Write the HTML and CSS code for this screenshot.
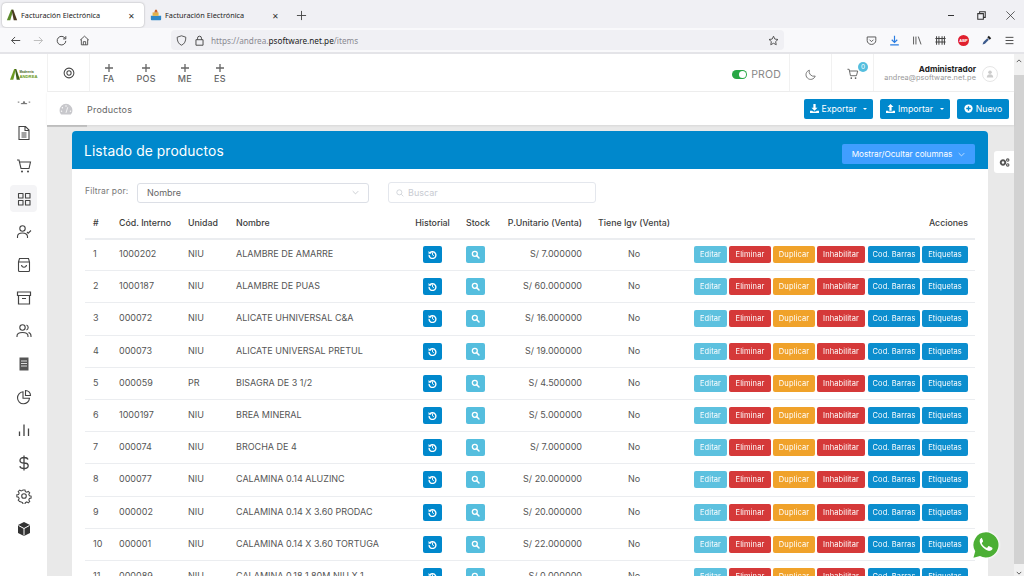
FILE: index.html
```html
<!DOCTYPE html>
<html lang="es">
<head>
<meta charset="utf-8">
<title>Facturación Electrónica</title>
<link rel="stylesheet" href="styles.css">
</head>
<body>
<svg class="defs" width="0" height="0" aria-hidden="true">
  <symbol id="i-history" viewBox="0 0 16 16"><path d="M3.400 5.200A6 6 0 1 1 2 8.600" fill="none" stroke="#fff" stroke-width="2.400"/><path d="M1 1.800v5h5z" fill="#fff"/><path d="M8 4.600v3.900l2.400 1.600" fill="none" stroke="#fff" stroke-width="1.700"/></symbol>
  <symbol id="i-search" viewBox="0 0 16 16"><circle cx="6.800" cy="6.800" r="4.400" fill="none" stroke="#fff" stroke-width="2.300"/><path d="M10 10l4.200 4.200" stroke="#fff" stroke-width="2.600" stroke-linecap="round"/></symbol>
  <symbol id="i-plus" viewBox="0 0 8 8"><path d="M4 0v8M0 4h8" stroke="#666" stroke-width="1.300"/></symbol>
</svg>

<div class="tabs">
  <div class="tab tab-active">
    <svg class="favicon" viewBox="0 0 14 14"><path d="M1 13L6 1h2.500L5 13z" fill="#5c8a2c"/><path d="M6.500 1h2l4.500 12H9z" fill="#4a3a20"/></svg>
    <span class="tab-title">Facturación Electrónica</span><span class="tab-x">✕</span>
  </div>
  <div class="tab">
    <svg class="favicon" viewBox="0 0 14 14"><path d="M1 8h12v4a1 1 0 0 1-1 1H2a1 1 0 0 1-1-1z" fill="#2f88c8"/><path d="M3 8V4h7v4z" fill="#e2b24a"/><path d="M5 4l1-3h2l1 3z" fill="#c9662e"/></svg>
    <span class="tab-title">Facturación Electrónica</span><span class="tab-x">✕</span>
  </div>
  <svg class="newtab" viewBox="0 0 12 12"><path d="M6 1v10M1 6h10" stroke="#444" stroke-width="1" fill="none"/></svg>
  <div class="winctl">
    <svg viewBox="0 0 12 12"><path d="M0 6h8" stroke="#333" stroke-width="1.400"/></svg>
    <svg viewBox="0 0 12 12"><path d="M3.500 3V1h7.500v7.500H9M1 3.500h7.500V11H1z" stroke="#333" stroke-width="1.400" fill="none"/></svg>
    <svg viewBox="0 0 12 12"><path d="M.5 .5l11 11M11.500 .5l-11 11" stroke="#333" stroke-width="1"/></svg>
  </div>
</div>

<div class="toolbar">
  <div class="nav-btns">
    <svg viewBox="0 0 14 14"><path d="M13 7H2M6.500 2.500L2 7l4.500 4.500" stroke="#444" stroke-width="1.200" fill="none"/></svg>
    <svg viewBox="0 0 14 14"><path d="M1 7h11M7.500 2.500L12 7l-4.500 4.500" stroke="#bbb" stroke-width="1.200" fill="none"/></svg>
    <svg viewBox="0 0 14 14"><path d="M11.800 4.500A5.500 5.500 0 1 0 12.500 7.500M12.500 1.500v3.500H9" stroke="#444" stroke-width="1.200" fill="none"/></svg>
    <svg viewBox="0 0 14 14"><path d="M1.500 6.500L7 1.500l5.500 5M3 5.500V12.500h8V5.500M5.500 12.500V8.500h3v4" stroke="#444" stroke-width="1.100" fill="none"/></svg>
  </div>
  <div class="urlbar">
    <svg class="url-ic" viewBox="0 0 14 14"><path d="M7 1l5.500 1.800c0 5-1.500 8.500-5.500 10.200C3 11.300 1.500 7.800 1.500 2.800z" stroke="#444" stroke-width="1.100" fill="none"/></svg>
    <svg class="url-ic" viewBox="0 0 14 14"><path d="M4.500 6V4a2.500 2.500 0 0 1 5 0v2M2.500 6h9v7h-9z" stroke="#444" stroke-width="1.200" fill="none"/></svg>
    <span class="url">https://andrea.<b>psoftware.net.pe</b>/items</span>
    <svg class="url-star" viewBox="0 0 14 14"><path d="M7 1.500l1.700 3.700 4 .5-3 2.700.8 4L7 10.500l-3.500 1.900.8-4-3-2.700 4-.5z" stroke="#444" stroke-width="1.100" fill="none"/></svg>
  </div>
  <div class="tool-icons">
    <svg viewBox="0 0 14 14"><path d="M1.500 2.500h11v4.500a5.500 5 0 0 1-11 0zM4.500 6L7 8.500 9.500 6" stroke="#555" stroke-width="1.200" fill="none"/></svg>
    <svg viewBox="0 0 14 14"><path d="M7 1v8.500M3.500 6L7 9.500 10.500 6M1.500 12.500h11" stroke="#2a7de1" stroke-width="1.500" fill="none"/></svg>
    <svg viewBox="0 0 14 14"><path d="M2 2v10M5 2v10M8 2l3.500 10" stroke="#555" stroke-width="1.200" fill="none"/></svg>
    <svg viewBox="0 0 14 14"><path d="M2 1.500v11M5 1.500v11M9 1.500v11M12 1.500v11M0.500 4.500h13M0.500 9h13" stroke="#444" stroke-width="1.300" fill="none"/></svg>
    <span class="abp">ABP</span>
    <svg viewBox="0 0 14 14"><path d="M2 12l1-3 5-5 2 2-5 5z" fill="#3c5a8c"/><path d="M8 3l2-2 3 3-2 2z" fill="#222"/></svg>
    <svg viewBox="0 0 14 14"><path d="M2 3h10M2 7h10M2 11h10" stroke="#444" stroke-width="1.200"/></svg>
  </div>
</div>

<div class="app">
  <aside class="sidebar">
    <div class="logo">
      <svg class="logo-a" viewBox="0 0 12 14"><path d="M0 14L5 1h2L4 14z" fill="#6d9b22"/><path d="M6 1h1.500L12 14H8z" fill="#3f5f18"/></svg>
      <div class="logo-text"><span>Madereria</span><span class="logo-big">ANDREA</span></div>
    </div>
    <nav class="side-nav">
      <div class="nav-clip"><svg viewBox="0 0 18 5"><path d="M1 2h2M15 2h2M5 4h8M7.500 4L9 1l1.500 3" stroke="#555" stroke-width="1.100" fill="none"/></svg></div>
      <div class="nav-item"><svg viewBox="0 0 16 16"><path d="M3 1.500h6.500l3.500 3.500v9.500H3zM9 1.500V5.500h4M5.500 8h5M5.500 10h5M5.500 12h5" stroke="#444" stroke-width="1.100" fill="none"/></svg></div>
      <div class="nav-item"><svg viewBox="0 0 16 16"><path d="M1 2h2l2 8.500h8l1.500-6.500H3.500" stroke="#444" stroke-width="1.100" fill="none"/><circle cx="6" cy="13.500" r="1" fill="#444"/><circle cx="12" cy="13.500" r="1" fill="#444"/></svg></div>
      <div class="nav-item nav-active"><svg viewBox="0 0 16 16"><path d="M2.500 2.500h4.500v4.500H2.500zM9.500 2.500h4.500v4.500H9.500zM2.500 9.500h4.500v4.500H2.500zM9.500 9.500h4.500v4.500H9.500z" stroke="#444" stroke-width="1.100" fill="none" stroke-linejoin="round"/></svg></div>
      <div class="nav-item"><svg viewBox="0 0 16 16"><circle cx="6.500" cy="4.500" r="2.700" stroke="#444" stroke-width="1.100" fill="none"/><path d="M1.500 14v-1.500c0-2 2-3.500 5-3.500s5 1.500 5 3.500V14M11 8l1.200 1.200L15 6.500" stroke="#444" stroke-width="1.100" fill="none"/></svg></div>
      <div class="nav-item"><svg viewBox="0 0 16 16"><path d="M2.500 5l1-3.500h9l1 3.500v8.500a1 1 0 0 1-1 1h-9a1 1 0 0 1-1-1zM2.500 5h11M5.500 8c.5 3 4.500 3 5 0" stroke="#444" stroke-width="1.100" fill="none"/></svg></div>
      <div class="nav-item"><svg viewBox="0 0 16 16"><path d="M1.500 2h13v3.500h-13zM2.500 5.500V14h11V5.500M6 8.500h4" stroke="#444" stroke-width="1.200" fill="none"/></svg></div>
      <div class="nav-item"><svg viewBox="0 0 16 16"><circle cx="6.500" cy="4.500" r="2.700" stroke="#444" stroke-width="1.100" fill="none"/><path d="M1 14v-1c0-2.200 2.200-3.500 5.500-3.500S12 10.800 12 13v1M10.500 2a2.700 2.700 0 0 1 0 5M12.500 9.500c1.500.5 2.500 1.800 2.500 3.500v1" stroke="#444" stroke-width="1.100" fill="none"/></svg></div>
      <div class="nav-item"><svg viewBox="0 0 16 16"><path d="M3.500 1.500h9v13h-9z" fill="#555"/><path d="M5 5h6M5 7.500h6M5 10h6" stroke="#fff" stroke-width=".8"/></svg></div>
      <div class="nav-item"><svg viewBox="0 0 16 16"><path d="M7 2.800a6 6 0 1 0 6.500 6.500H7z" stroke="#444" stroke-width="1.100" fill="none"/><path d="M9.500 1.500a5 5 0 0 1 5 5h-5z" stroke="#444" stroke-width="1.100" fill="none"/></svg></div>
      <div class="nav-item"><svg viewBox="0 0 16 16"><path d="M3.500 14V9.500M8 14V2.500M12.500 14V6.500" stroke="#444" stroke-width="1.300"/></svg></div>
      <div class="nav-item"><svg viewBox="0 0 16 16"><path d="M12 4.500C11.500 3 10 2.500 8 2.500c-2.500 0-4 1-4 3s1.500 2.500 4 2.500 4.200.7 4.200 2.800S10.500 13.500 8 13.500c-2.200 0-3.700-.8-4.200-2.300M8 .5v15" stroke="#444" stroke-width="1.300" fill="none"/></svg></div>
      <div class="nav-item"><svg viewBox="0 0 16 16"><circle cx="8" cy="8" r="2.300" stroke="#444" stroke-width="1.100" fill="none"/><path d="M6.800 1h2.400l.4 2 1.700.7 1.700-1.100 1.700 1.700-1.100 1.700.7 1.700 2 .4v2.400l-2 .4-.7 1.700 1.100 1.700-1.700 1.700-1.700-1.100-1.700.7-.4 2H6.800l-.4-2-1.700-.7L3 14.500l-1.700-1.700 1.100-1.700-.7-1.700-2-.4V6.600l2-.4.7-1.700-1.100-1.700L3 1.100l1.700 1.100 1.700-.7z" transform="translate(1.100 1.100) scale(.86)" stroke="#444" stroke-width="1.200" fill="none"/></svg></div>
      <div class="nav-item"><svg viewBox="0 0 16 16"><path d="M8 1l6 3v8l-6 3-6-3V4z" fill="#333"/><path d="M2.500 4.500L8 7.500l5.500-3M8 7.500V14.500" stroke="#fff" stroke-width="1" fill="none"/></svg></div>
    </nav>
  </aside>

  <div class="page">
    <header class="topbar">
      <div class="tb-cell tb-target">
        <svg viewBox="0 0 14 14"><circle cx="7" cy="7" r="5.700" stroke="#444" stroke-width="1.200" fill="none"/><circle cx="7" cy="7" r="2.500" stroke="#444" stroke-width="1.200" fill="none"/></svg>
      </div>
      <div class="quick">
        <div class="quick-item"><svg class="plus"><use href="#i-plus"/></svg><span>FA</span></div>
        <div class="quick-item"><svg class="plus"><use href="#i-plus"/></svg><span>POS</span></div>
        <div class="quick-item"><svg class="plus"><use href="#i-plus"/></svg><span>ME</span></div>
        <div class="quick-item"><svg class="plus"><use href="#i-plus"/></svg><span>ES</span></div>
      </div>
      <div class="tb-prod"><span class="switch"></span><span class="prod">PROD</span></div>
      <div class="tb-cell tb-moon"><svg viewBox="0 0 14 14"><path d="M5.500 1.500a6 6 0 1 0 7.500 7.500A6 6 0 0 1 5.500 1.500z" stroke="#666" stroke-width="1.100" fill="none"/></svg></div>
      <div class="tb-cell tb-cart">
        <svg viewBox="0 0 14 14"><path d="M.500 1.500h2l1.500 7.500h7l1.500-5.500H3" stroke="#555" stroke-width="1" fill="none"/><circle cx="5" cy="11.800" r="1" fill="#555"/><circle cx="10" cy="11.800" r="1" fill="#555"/></svg>
        <span class="badge">0</span>
      </div>
      <div class="tb-user">
        <div class="user-text"><strong>Administrador</strong><span>andrea@psoftware.net.pe</span></div>
        <span class="avatar"><svg viewBox="0 0 14 14"><circle cx="7" cy="4.500" r="2.500" fill="#ccc"/><path d="M2.500 12c0-3 2-4.500 4.500-4.500s4.500 1.500 4.500 4.500z" fill="#ccc"/></svg></span>
      </div>
    </header>

    <div class="subbar">
      <svg class="gauge" viewBox="0 0 16 14"><path d="M8 1a7.500 7.500 0 0 0-7.500 7.500c0 2 .7 3.800 1.800 4.800h11.400c1.100-1 1.800-2.800 1.800-4.800A7.500 7.500 0 0 0 8 1z" fill="#c8c8cc"/><path d="M8 11.500L10 5" stroke="#fff" stroke-width=".9"/><circle cx="8" cy="3.500" r=".8" fill="#fff"/><circle cx="3.800" cy="5.500" r=".8" fill="#fff"/><circle cx="2.800" cy="9.500" r=".8" fill="#fff"/><circle cx="13.200" cy="9.500" r=".8" fill="#fff"/></svg>
      <span class="crumb">Productos</span>
      <div class="sub-actions">
        <span class="btn-top btn-exp"><svg viewBox="0 0 12 12"><path d="M4.500 0h3v5H10L6 9 2 5h2.500zM0 9h3l1 1h4l1-1h3v3H0z" fill="#fff"/></svg>Exportar<i class="caret"></i></span>
        <span class="btn-top btn-imp"><svg viewBox="0 0 12 12"><path d="M4.500 9h3V4H10L6 0 2 4h2.500zM0 9h3v1h6V9h3v3H0z" fill="#fff"/></svg>Importar<i class="caret"></i></span>
        <span class="btn-top btn-new"><svg viewBox="0 0 12 12"><circle cx="6" cy="6" r="5.500" fill="#fff"/><path d="M6 3v6M3 6h6" stroke="#0088cc" stroke-width="1.800"/></svg>Nuevo</span>
      </div>
    </div>

    <main class="content">
      <section class="card">
        <div class="card-head">
          <h1>Listado de productos</h1>
          <span class="btn-cols">Mostrar/Ocultar columnas<svg viewBox="0 0 10 6"><path d="M1 1l4 4 4-4" stroke="#fff" stroke-width=".9" fill="none"/></svg></span>
        </div>
        <div class="card-body">
          <div class="filters">
            <span class="filter-label">Filtrar por:</span>
            <div class="select"><span>Nombre</span><svg viewBox="0 0 10 6"><path d="M1 1l4 4 4-4" stroke="#b0b4bb" stroke-width=".9" fill="none"/></svg></div>
            <div class="search"><svg viewBox="0 0 12 12"><circle cx="5" cy="5" r="3.800" stroke="#c0c4cc" stroke-width="1" fill="none"/><path d="M8 8l3 3" stroke="#c0c4cc" stroke-width="1"/></svg><span>Buscar</span></div>
          </div>
          <table class="grid">
            <colgroup><col class="c1"><col class="c2"><col class="c3"><col class="c4"><col class="c5"><col class="c6"><col class="c7"><col class="c8"><col class="c9"></colgroup>
            <thead><tr><th>#</th><th>Cód. Interno</th><th>Unidad</th><th>Nombre</th><th class="ctr">Historial</th><th>Stock</th><th class="rgt">P.Unitario (Venta)</th><th class="ctr">Tiene Igv (Venta)</th><th class="rgt">Acciones</th></tr></thead>
            <tbody>
              <tr><td>1</td><td>1000202</td><td>NIU</td><td>ALAMBRE DE AMARRE</td><td class="ctr"><span class="ib ib-blue"><svg><use href="#i-history"/></svg></span></td><td><span class="ib ib-info"><svg><use href="#i-search"/></svg></span></td><td class="rgt">S/ 7.000000</td><td class="ctr">No</td><td class="rgt"><div class="acts"><span class="b b-info">Editar</span><span class="b b-red">Eliminar</span><span class="b b-org">Duplicar</span><span class="b b-red">Inhabilitar</span><span class="b b-blue">Cod. Barras</span><span class="b b-blue">Etiquetas</span></div></td></tr>
              <tr><td>2</td><td>1000187</td><td>NIU</td><td>ALAMBRE DE PUAS</td><td class="ctr"><span class="ib ib-blue"><svg><use href="#i-history"/></svg></span></td><td><span class="ib ib-info"><svg><use href="#i-search"/></svg></span></td><td class="rgt">S/ 60.000000</td><td class="ctr">No</td><td class="rgt"><div class="acts"><span class="b b-info">Editar</span><span class="b b-red">Eliminar</span><span class="b b-org">Duplicar</span><span class="b b-red">Inhabilitar</span><span class="b b-blue">Cod. Barras</span><span class="b b-blue">Etiquetas</span></div></td></tr>
              <tr><td>3</td><td>000072</td><td>NIU</td><td>ALICATE UHNIVERSAL C&amp;A</td><td class="ctr"><span class="ib ib-blue"><svg><use href="#i-history"/></svg></span></td><td><span class="ib ib-info"><svg><use href="#i-search"/></svg></span></td><td class="rgt">S/ 16.000000</td><td class="ctr">No</td><td class="rgt"><div class="acts"><span class="b b-info">Editar</span><span class="b b-red">Eliminar</span><span class="b b-org">Duplicar</span><span class="b b-red">Inhabilitar</span><span class="b b-blue">Cod. Barras</span><span class="b b-blue">Etiquetas</span></div></td></tr>
              <tr><td>4</td><td>000073</td><td>NIU</td><td>ALICATE UNIVERSAL PRETUL</td><td class="ctr"><span class="ib ib-blue"><svg><use href="#i-history"/></svg></span></td><td><span class="ib ib-info"><svg><use href="#i-search"/></svg></span></td><td class="rgt">S/ 19.000000</td><td class="ctr">No</td><td class="rgt"><div class="acts"><span class="b b-info">Editar</span><span class="b b-red">Eliminar</span><span class="b b-org">Duplicar</span><span class="b b-red">Inhabilitar</span><span class="b b-blue">Cod. Barras</span><span class="b b-blue">Etiquetas</span></div></td></tr>
              <tr><td>5</td><td>000059</td><td>PR</td><td>BISAGRA DE 3 1/2</td><td class="ctr"><span class="ib ib-blue"><svg><use href="#i-history"/></svg></span></td><td><span class="ib ib-info"><svg><use href="#i-search"/></svg></span></td><td class="rgt">S/ 4.500000</td><td class="ctr">No</td><td class="rgt"><div class="acts"><span class="b b-info">Editar</span><span class="b b-red">Eliminar</span><span class="b b-org">Duplicar</span><span class="b b-red">Inhabilitar</span><span class="b b-blue">Cod. Barras</span><span class="b b-blue">Etiquetas</span></div></td></tr>
              <tr><td>6</td><td>1000197</td><td>NIU</td><td>BREA MINERAL</td><td class="ctr"><span class="ib ib-blue"><svg><use href="#i-history"/></svg></span></td><td><span class="ib ib-info"><svg><use href="#i-search"/></svg></span></td><td class="rgt">S/ 5.000000</td><td class="ctr">No</td><td class="rgt"><div class="acts"><span class="b b-info">Editar</span><span class="b b-red">Eliminar</span><span class="b b-org">Duplicar</span><span class="b b-red">Inhabilitar</span><span class="b b-blue">Cod. Barras</span><span class="b b-blue">Etiquetas</span></div></td></tr>
              <tr><td>7</td><td>000074</td><td>NIU</td><td>BROCHA DE 4</td><td class="ctr"><span class="ib ib-blue"><svg><use href="#i-history"/></svg></span></td><td><span class="ib ib-info"><svg><use href="#i-search"/></svg></span></td><td class="rgt">S/ 7.000000</td><td class="ctr">No</td><td class="rgt"><div class="acts"><span class="b b-info">Editar</span><span class="b b-red">Eliminar</span><span class="b b-org">Duplicar</span><span class="b b-red">Inhabilitar</span><span class="b b-blue">Cod. Barras</span><span class="b b-blue">Etiquetas</span></div></td></tr>
              <tr><td>8</td><td>000077</td><td>NIU</td><td>CALAMINA 0.14 ALUZINC</td><td class="ctr"><span class="ib ib-blue"><svg><use href="#i-history"/></svg></span></td><td><span class="ib ib-info"><svg><use href="#i-search"/></svg></span></td><td class="rgt">S/ 20.000000</td><td class="ctr">No</td><td class="rgt"><div class="acts"><span class="b b-info">Editar</span><span class="b b-red">Eliminar</span><span class="b b-org">Duplicar</span><span class="b b-red">Inhabilitar</span><span class="b b-blue">Cod. Barras</span><span class="b b-blue">Etiquetas</span></div></td></tr>
              <tr><td>9</td><td>000002</td><td>NIU</td><td>CALAMINA 0.14 X 3.60 PRODAC</td><td class="ctr"><span class="ib ib-blue"><svg><use href="#i-history"/></svg></span></td><td><span class="ib ib-info"><svg><use href="#i-search"/></svg></span></td><td class="rgt">S/ 20.000000</td><td class="ctr">No</td><td class="rgt"><div class="acts"><span class="b b-info">Editar</span><span class="b b-red">Eliminar</span><span class="b b-org">Duplicar</span><span class="b b-red">Inhabilitar</span><span class="b b-blue">Cod. Barras</span><span class="b b-blue">Etiquetas</span></div></td></tr>
              <tr><td>10</td><td>000001</td><td>NIU</td><td>CALAMINA 0.14 X 3.60 TORTUGA</td><td class="ctr"><span class="ib ib-blue"><svg><use href="#i-history"/></svg></span></td><td><span class="ib ib-info"><svg><use href="#i-search"/></svg></span></td><td class="rgt">S/ 22.000000</td><td class="ctr">No</td><td class="rgt"><div class="acts"><span class="b b-info">Editar</span><span class="b b-red">Eliminar</span><span class="b b-org">Duplicar</span><span class="b b-red">Inhabilitar</span><span class="b b-blue">Cod. Barras</span><span class="b b-blue">Etiquetas</span></div></td></tr>
              <tr><td>11</td><td>000089</td><td>NIU</td><td>CALAMINA 0.18 1.80M NIU X 1</td><td class="ctr"><span class="ib ib-blue"><svg><use href="#i-history"/></svg></span></td><td><span class="ib ib-info"><svg><use href="#i-search"/></svg></span></td><td class="rgt">S/ 0.000000</td><td class="ctr">No</td><td class="rgt"><div class="acts"><span class="b b-info">Editar</span><span class="b b-red">Eliminar</span><span class="b b-org">Duplicar</span><span class="b b-red">Inhabilitar</span><span class="b b-blue">Cod. Barras</span><span class="b b-blue">Etiquetas</span></div></td></tr>
            </tbody>
          </table>
        </div>
      </section>
      <div class="cfg-tab"><svg viewBox="0 0 14 12"><circle cx="5" cy="6" r="3" fill="none" stroke="#555" stroke-width="2.600"/><circle cx="11.300" cy="2.800" r="1.600" fill="none" stroke="#555" stroke-width="1.500"/><circle cx="11.300" cy="9.200" r="1.600" fill="none" stroke="#555" stroke-width="1.500"/></svg></div>
      <div class="wa"><svg viewBox="0 0 32 32"><path d="M16 2.500a13.400 13.400 0 0 0-11.500 20.200L2.600 29.500l7-1.800A13.400 13.400 0 1 0 16 2.500z" fill="#4caf35"/><path d="M11.500 8.500c-.6 0-1.600.7-2 1.700-.8 2.200.2 5.200 2.800 8 2.700 2.900 5.700 4.500 8 4 1.400-.3 2.500-1.300 2.600-2.300.1-.6-.1-1-.6-1.300l-2.800-1.400c-.5-.2-.9-.1-1.200.3l-1 1.300c-.3.300-.6.300-1 .2-2-.9-3.600-2.400-4.600-4.300-.2-.4-.1-.7.1-1l.9-1.100c.3-.3.300-.7.100-1.100l-1.200-2.900c-.2-.4-.6-.6-1.100-.6z" fill="#fff"/></svg></div>
    </main>
  </div>

  <div class="scroll">
    <svg class="sc-up" viewBox="0 0 8 5"><path d="M1 4l3-3 3 3" stroke="#444" stroke-width="1.100" fill="none"/></svg>
    <div class="sc-thumb"></div>
    <svg class="sc-down" viewBox="0 0 8 5"><path d="M1 1l3 3 3-3" stroke="#444" stroke-width="1.100" fill="none"/></svg>
  </div>
</div>
</body>
</html>
```

FILE: styles.css
```css
* { box-sizing: border-box; }
html, body { margin: 0; height: 100%; overflow: hidden; }
body { display: flex; flex-direction: column; font-family: "Inter", "Liberation Sans", sans-serif; color: #444; background: #fff; }
svg { display: block; }
.defs { position: absolute; }

.tabs { height: 28px; background: #f0f0f4; display: flex; align-items: center; padding: 2px 0 0 2px; flex: none; }
.tab { width: 142px; height: 24px; display: flex; align-items: center; padding: 0 6px 0 4px; font: 7.300px "Noto Sans", sans-serif; color: #222; margin-right: 2px; }
.tab-active { background: #fff; border-radius: 4px; box-shadow: 0 0 2px rgba(0,0,0,.35); }
.favicon { width: 12px; height: 12px; margin-right: 3px; }
.tab-title { flex: 1; }
.tab-x { font-size: 8px; color: #333; margin-right: 3px; }
.newtab { width: 11px; height: 11px; margin-left: 6px; }
.winctl { margin-left: auto; display: flex; gap: 20px; padding-right: 9px; }
.winctl svg { width: 9px; height: 9px; }

.toolbar { height: 26px; background: #f9f9fb; border-bottom: 2px solid #e4e4e8; display: flex; align-items: center; flex: none; }
.nav-btns { width: 171px; display: flex; gap: 12px; padding-left: 10px; flex: none; }
.nav-btns svg { width: 11px; height: 11px; }
.urlbar { width: 613px; height: 20px; background: #f0f0f4; border-radius: 4px; display: flex; align-items: center; padding: 0 5px; gap: 7px; }
.url-ic { width: 11px; height: 11px; }
.url { font: 8.200px "Noto Sans", sans-serif; color: #8a8a92; flex: 1; margin-left: -1px; }
.url b { font-weight: 400; color: #222; }
.url-star { width: 11px; height: 11px; }
.tool-icons { display: flex; flex: 1; justify-content: flex-end; align-items: center; gap: 12px; padding-right: 9px; }
.tool-icons svg { width: 11px; height: 11px; }
.abp { width: 11px; height: 11px; border-radius: 50%; background: #e0202e; color: #fff; font: 700 4px "Liberation Sans", sans-serif; display: flex; align-items: center; justify-content: center; }

.app { flex: 1; min-height: 0; display: flex; }
.sidebar { width: 47px; flex: none; background: #fff; display: flex; flex-direction: column; overflow: hidden; }
.logo { height: 38px; display: flex; align-items: center; justify-content: center; gap: 0; padding-top: 2px; flex: none; }
.logo-a { width: 10px; height: 12px; }
.logo-text { display: flex; flex-direction: column; font: 700 3px/4px "Liberation Sans", sans-serif; color: #3f5f18; }
.logo-big { font-size: 4.200px; line-height: 5px; color: #6d9b22; }
.side-nav { display: flex; flex-direction: column; align-items: center; padding-top: 8px; }
.nav-clip { height: 16px; display: flex; justify-content: center; }
.nav-clip svg { width: 14px; height: 5px; }
.nav-item { width: 27px; height: 27px; margin: 3px 0; border-radius: 4px; display: flex; align-items: center; justify-content: center; flex: none; }
.nav-item svg { width: 16px; height: 16px; }
.nav-active { background: #f4f4f6; }

.page { flex: 1; min-width: 0; display: flex; flex-direction: column; position: relative; }
.topbar { height: 38px; background: #fff; border-left: 1px solid #f1f1f1; border-bottom: 1px solid #eee; display: flex; align-items: stretch; flex: none; }
.tb-cell { display: flex; align-items: center; justify-content: center; border-right: 1px solid #f1f1f1; position: relative; flex: none; }
.tb-target { width: 42px; padding-top: 1px; }
.tb-target svg { width: 12px; height: 12px; }
.quick { display: flex; flex: 1; padding-left: 13px; gap: 22px; }
.quick-item { display: flex; flex-direction: column; align-items: center; justify-content: center; gap: 2px; padding-top: 3px; font-size: 9px; font-weight: 500; color: #666; line-height: 10px; letter-spacing: .3px; }
.plus { width: 8px; height: 8px; }
.tb-prod { display: flex; align-items: center; gap: 4px; border-right: 1px solid #f1f1f1; padding: 3px 8px 0 0; }
.switch { width: 15px; height: 9px; border-radius: 5px; background: #28a745; position: relative; }
.switch::after { content: ""; position: absolute; right: 1px; top: 1px; width: 7px; height: 7px; border-radius: 50%; background: #fff; }
.prod { font-size: 10.500px; color: #888; letter-spacing: .2px; }
.tb-moon { width: 42px; padding-top: 3px; }
.tb-moon svg { width: 11px; height: 11px; }
.tb-cart { width: 42px; padding-top: 3px; }
.tb-cart svg { width: 12px; height: 12px; }
.badge { position: absolute; left: 26px; top: 8px; width: 10px; height: 10px; border-radius: 50%; background: #55bede; color: #fff; font-size: 6.500px; display: flex; align-items: center; justify-content: center; }
.tb-user { width: 140px; display: flex; align-items: center; justify-content: flex-end; gap: 6px; padding: 2px 16px 0 0; flex: none; }
.user-text { display: flex; flex-direction: column; align-items: flex-end; line-height: 8.500px; }
.user-text strong { font-size: 8.200px; color: #222; font-weight: 700; }
.user-text span { font-size: 7.300px; color: #999; letter-spacing: .1px; }
.avatar { width: 16px; height: 16px; border-radius: 50%; border: 1px solid #e6e6e6; display: flex; align-items: center; justify-content: center; }
.avatar svg { width: 10px; height: 10px; }

.subbar { height: 33px; background: #fff; display: flex; align-items: center; padding: 0 5px 0 12px; flex: none; box-shadow: 0 1px 2px rgba(0,0,0,.08); position: relative; z-index: 1; }
.gauge { width: 14px; height: 12px; margin-right: 14px; }
.crumb { font-size: 9px; color: #666; flex: 1; letter-spacing: .2px; padding-top: 1px; }
.sub-actions { display: flex; gap: 7px; }
.btn-top { height: 20px; background: #0088cc; color: #fff; border-radius: 2px; font-size: 8.700px; display: flex; align-items: center; justify-content: center; gap: 2px; }
.btn-exp { width: 69px; }
.btn-imp { width: 70px; }
.btn-new { width: 52px; }
.btn-top svg { width: 9px; height: 9px; margin-right: 1px; }
.caret { width: 0; height: 0; border: 2.500px solid transparent; border-top-color: #fff; border-bottom: 0; margin-left: 5px; }

.content { flex: 1; min-height: 0; background: #e9e9e9; position: relative; padding: 6px 26px 0 25px; overflow: hidden; }
.content::before { content: ""; position: absolute; left: 0; top: 0; width: 40px; height: 2px; background: #c8c8c8; }
.card { background: #fff; border-radius: 4px 4px 0 0; height: 600px; }
.card-head { height: 38px; background: #0088cc; border-radius: 4px 4px 0 0; display: flex; align-items: center; justify-content: space-between; padding: 0 13px 0 12px; }
.card-head h1 { margin: 2px 0 0; font-size: 13.800px; font-weight: 400; color: #fff; letter-spacing: .1px; }
.btn-cols { height: 20px; width: 133px; margin-top: 8px; background: #409eff; border-radius: 2px; color: #fff; font-size: 8.200px; display: flex; align-items: center; justify-content: center; gap: 6px; }
.btn-cols svg { width: 7px; height: 5px; }
.card-body { padding: 13px 13px 0; }
.filters { display: flex; align-items: center; height: 21px; }
.filter-label { width: 52px; font-size: 8.500px; color: #777; margin-top: -4px; letter-spacing: .15px; }
.select { width: 232px; height: 20px; border: 1px solid #dcdfe6; border-radius: 3px; display: flex; align-items: center; justify-content: space-between; padding: 0 9px; font-size: 9px; color: #666; }
.select svg { width: 7px; height: 5px; }
.search { width: 208px; height: 21px; margin-left: 19px; border: 1px solid #e4e7ed; border-radius: 3px; display: flex; align-items: center; padding: 0 8px 0 7px; gap: 4px; font-size: 9px; color: #c8cbd2; }
.search svg { width: 8px; height: 8px; }
.grid { width: 890px; border-collapse: collapse; table-layout: fixed; margin-top: 8px; }
.c1 { width: 26px; } .c2 { width: 69px; } .c3 { width: 48px; } .c4 { width: 179px; } .c5 { width: 51px; } .c6 { width: 39px; } .c7 { width: 93px; } .c8 { width: 88px; } .c9 { width: 297px; }
.grid th, .grid td { padding: 0 8px; text-align: left; font-size: 9px; white-space: nowrap; }
.grid th { height: 27.500px; padding-bottom: 3px; font-size: 8.800px; font-weight: 500; color: #3c3c3c; border-bottom: 2px solid #ebedf0; }
.grid td { height: 32.200px; padding-bottom: 2px; color: #555; border-bottom: 1px solid #ebedf0; }
.grid td:has(.ib), .grid td:has(.acts) { padding-bottom: 0; }
.grid .ctr { text-align: center; padding-left: 0; padding-right: 0; }
.grid .rgt { text-align: right; }
.grid th:last-child, .grid td:last-child { padding-right: 7px; }
.ib { display: inline-flex; width: 19px; height: 17px; border-radius: 2px; align-items: center; justify-content: center; vertical-align: middle; }
.ib svg { width: 9px; height: 9px; }
.ib-blue { background: #0088cc; }
.ib-info { background: #55bede; }
.acts { display: flex; justify-content: flex-end; gap: 2px; }
.b { height: 17px; border-radius: 2px; color: #fff; font-size: 7.500px; display: flex; align-items: center; justify-content: center; letter-spacing: .1px; opacity: .95; }
.b-info { background: #55bede; width: 33px; }
.b-red { background: #d32f2f; }
.b-org { background: #f09e1f; width: 42px; }
.b-blue { background: #0088cc; }
.b-red:nth-child(2) { width: 42px; }
.b-red:nth-child(4) { width: 48px; }
.b-blue:nth-child(5) { width: 52px; margin-left: 1px; }
.b-blue:nth-child(6) { width: 46px; }

.cfg-tab { position: absolute; right: 0; top: 26px; width: 20px; height: 22px; background: #fff; border-radius: 3px 0 0 3px; display: flex; align-items: center; justify-content: center; }
.cfg-tab svg { width: 11px; height: 9px; }
.wa { position: absolute; right: 13px; bottom: 15px; width: 30px; height: 31px; }
.wa svg { width: 30px; height: 30px; filter: drop-shadow(0 0 1px #fff) drop-shadow(0 0 1px #fff); }

.scroll { width: 10px; flex: none; background: #f1f1f1; display: flex; flex-direction: column; align-items: center; }
.sc-up { width: 6px; height: 4px; margin-top: 5px; flex: none; }
.sc-thumb { width: 100%; flex: 1; margin-top: 12px; margin-bottom: 7px; background: #d2d2d2; }
.sc-down { width: 6px; height: 4px; margin-bottom: 1px; flex: none; }
```
